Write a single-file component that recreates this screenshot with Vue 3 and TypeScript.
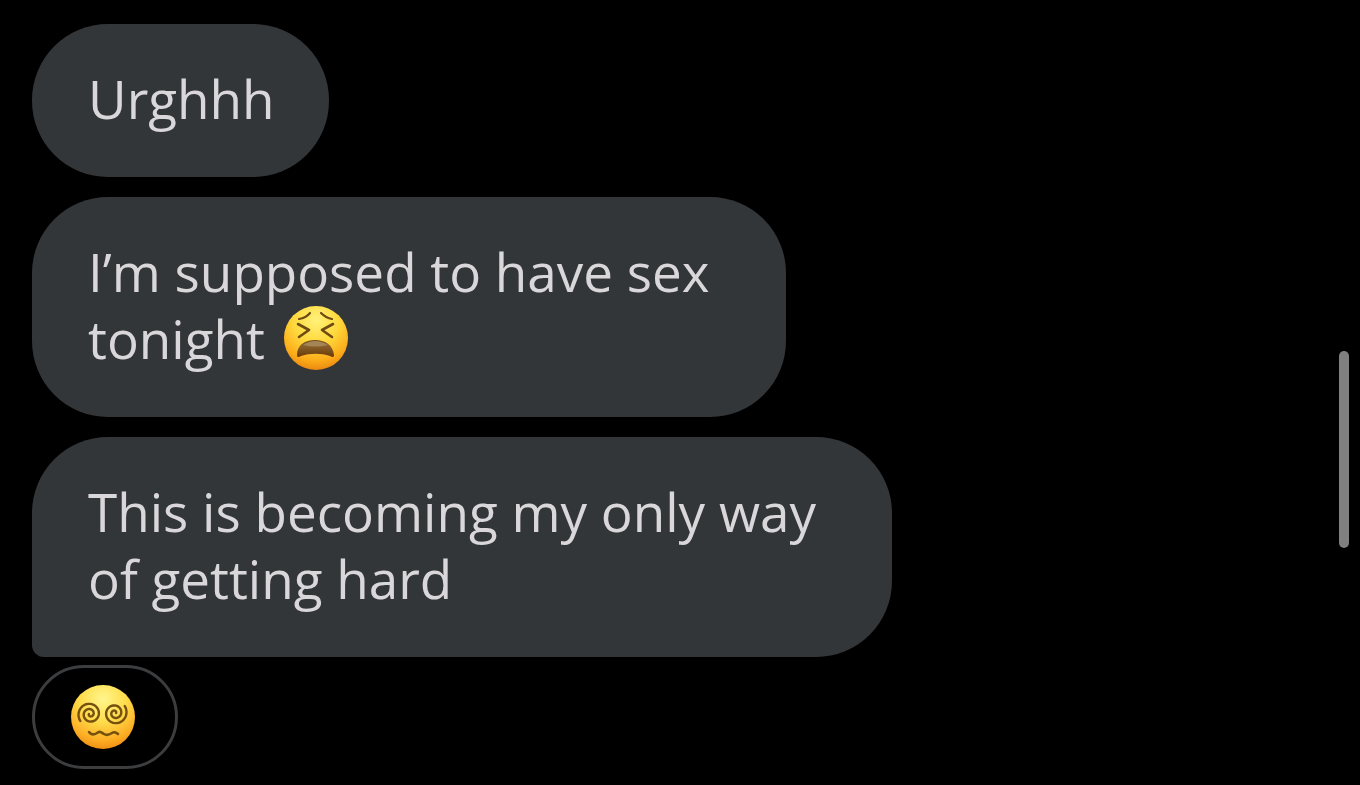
<script setup lang="ts">
interface Message {
  id: number
  lines: string[]
  emoji?: boolean
}

const messages: Message[] = [
  { id: 1, lines: ['Urghhh'] },
  { id: 2, lines: ['I’m supposed to have sex', 'tonight'], emoji: true },
  { id: 3, lines: ['This is becoming my only way', 'of getting hard'] },
]

// Spiral that winds clockwise from its outer end towards the centre of an eye
function spiral(cx: number, cy: number, radius: number, endAngle: number, turns: number): string {
  const steps = 72
  const points: string[] = []
  for (let i = 0; i <= steps; i++) {
    const t = i / steps
    const angle = endAngle + (1 - t) * turns * 2 * Math.PI
    const r = 1 + (radius - 1) * t
    points.push(`${(cx + r * Math.cos(angle)).toFixed(2)} ${(cy + r * Math.sin(angle)).toFixed(2)}`)
  }
  return 'M' + points.join('L')
}

const leftEye = spiral(20, 30, 12, Math.PI * 0.8, 2.1)
const rightEye = spiral(45, 29, 12, -Math.PI * 0.2, 2.1)
</script>

<template>
  <main class="chat">
    <ul class="messages">
      <li
        v-for="message in messages"
        :key="message.id"
        class="bubble"
        :class="{ wrapped: message.lines.length > 1 }"
      >
        <p class="text">
          <span v-for="(line, i) in message.lines" :key="i" class="line">{{ line
            }}<svg
              v-if="message.emoji && i === message.lines.length - 1"
              class="emoji inline"
              viewBox="0 0 66 66"
              role="img"
              aria-label="Tired face"
            >
              <defs>
                <radialGradient id="tired-skin" cx="0.5" cy="0.22" r="0.8">
                  <stop offset="0" stop-color="#fff27a" />
                  <stop offset="0.45" stop-color="#ffd83b" />
                  <stop offset="0.8" stop-color="#fbab19" />
                  <stop offset="1" stop-color="#e88410" />
                </radialGradient>
                <linearGradient id="tired-mouth" x1="0" y1="0" x2="0" y2="1">
                  <stop offset="0" stop-color="#765019" />
                  <stop offset="0.35" stop-color="#89602a" />
                  <stop offset="1" stop-color="#6a3a08" />
                </linearGradient>
              </defs>
              <circle cx="33" cy="33" r="32" fill="url(#tired-skin)" />
              <g fill="none" stroke="#6d4b12" stroke-linecap="round" stroke-linejoin="round">
                <path d="M16 14Q23 13 27 8" stroke-width="2.2" />
                <path d="M38 8Q43 13 49 14" stroke-width="2.2" />
                <path d="M15 19L26 25L16 32" stroke-width="2.6" />
                <path d="M50 19L39 25L49 32" stroke-width="2.6" />
              </g>
              <path
                d="M14 50C14 40 22 35 32 35S50 40 51 50C51 53 49 52 47 51C38 48 27 48 18 51C16 52 14 53 14 50Z"
                fill="url(#tired-mouth)"
              />
              <path d="M20 40Q32 32 45 40Q32 43 20 40Z" fill="#a38558" />
            </svg></span>
        </p>
      </li>
    </ul>

    <button class="reaction" type="button" aria-label="Reaction: face with spiral eyes">
      <svg class="emoji" viewBox="0 0 66 66" aria-hidden="true">
        <defs>
          <radialGradient id="dizzy-skin" cx="0.5" cy="0.22" r="0.8">
            <stop offset="0" stop-color="#fff68c" />
            <stop offset="0.45" stop-color="#ffdc4b" />
            <stop offset="0.8" stop-color="#fdae24" />
            <stop offset="1" stop-color="#ee8c12" />
          </radialGradient>
        </defs>
        <circle cx="33" cy="33" r="32" fill="url(#dizzy-skin)" />
        <g fill="none" stroke="#76500f" stroke-linecap="round" stroke-linejoin="round">
          <path :d="leftEye" stroke-width="2.4" />
          <path :d="rightEye" stroke-width="2.4" />
          <path d="M19 48C21 51 24 51 27 49S31 48 34 50S39 51 42 49S46 49 48 50" stroke-width="2.6" />
        </g>
      </svg>
    </button>

    <div class="scroll-thumb" aria-hidden="true"></div>
  </main>
</template>

<style>
body {
  margin: 0;
  background: #000;
}
</style>

<style scoped>
.chat {
  position: relative;
  box-sizing: border-box;
  min-height: 100vh;
  padding: 24px 32px 16px;
  background: #000;
  color: #d9d7da;
  font-family: 'Open Sans', 'Noto Sans', sans-serif;
  font-size: 53px;
  line-height: 67px;
}

.messages {
  display: flex;
  flex-direction: column;
  align-items: flex-start;
  gap: 20px;
  margin: 0;
  padding: 0;
  list-style: none;
}

.bubble {
  box-sizing: border-box;
  max-width: 100%;
  padding: 41px 54px 45px 56px;
  border-radius: 76px;
  background: #333638;
}

.bubble.wrapped {
  padding-right: 76px;
}

.bubble:last-child {
  border-bottom-left-radius: 12px;
}

.text {
  margin: 0;
}

.line {
  display: block;
}

.emoji {
  display: block;
  width: 66px;
  height: 66px;
}

.emoji.inline {
  display: inline-block;
  margin-left: 18px;
  vertical-align: top;
}

.reaction {
  display: flex;
  align-items: center;
  box-sizing: border-box;
  height: 104px;
  margin-top: 8px;
  padding: 0 39px 0 35px;
  border: 3px solid #3c3d3f;
  border-radius: 52px;
  background: #000;
  cursor: pointer;
}

.scroll-thumb {
  position: fixed;
  top: 351px;
  right: 11px;
  width: 10px;
  height: 197px;
  border-radius: 5px;
  background: #808080;
}
</style>
